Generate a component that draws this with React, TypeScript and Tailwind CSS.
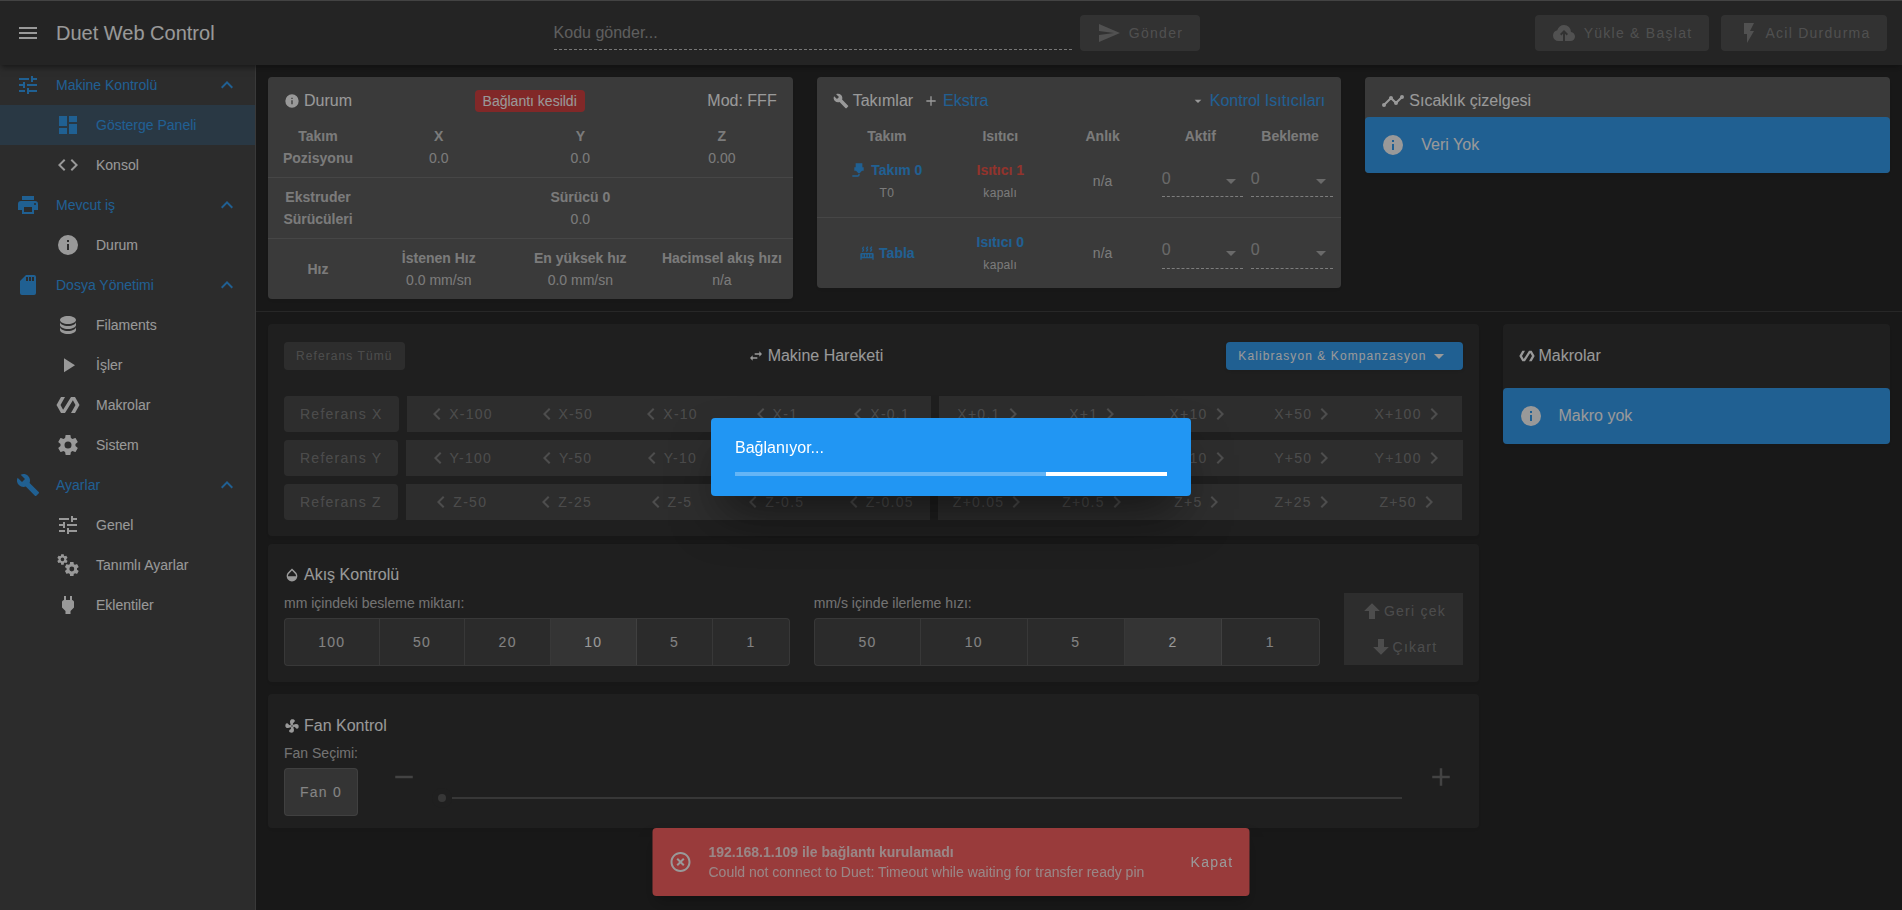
import React from "react";

const icons = {
  menu: "M3,6H21V8H3V6M3,11H21V13H3V11M3,16H21V18H3V16Z",
  tune: "M3,17V19H9V17H3M3,5V7H13V5H3M13,21V19H21V17H13V15H11V21H13M7,9V11H3V13H7V15H9V9H7M21,13V11H11V13H21M15,9H17V7H21V5H17V3H15V9Z",
  dashboard: "M13,3V9H21V3M13,21H21V11H13M3,21H11V15H3M3,13H11V3H3V13Z",
  code: "M14.6,16.6L19.2,12L14.6,7.4L16,6L22,12L16,18L14.6,16.6M9.4,16.6L4.8,12L9.4,7.4L8,6L2,12L8,18L9.4,16.6Z",
  printer:
    "M18,3H6V7H18M19,12A1,1 0 0,1 18,11A1,1 0 0,1 19,10A1,1 0 0,1 20,11A1,1 0 0,1 19,12M16,19H8V14H16M19,8H5A3,3 0 0,0 2,11V17H6V21H18V17H22V11A3,3 0 0,0 19,8Z",
  info: "M13,9H11V7H13M13,17H11V11H13M12,2A10,10 0 0,0 2,12A10,10 0 0,0 12,22A10,10 0 0,0 22,12A10,10 0 0,0 12,2Z",
  sd: "M18,8H16V4H18M15,8H13V4H15M12,8H10V4H12M18,2H10L4,8V20A2,2 0 0,0 6,22H18A2,2 0 0,0 20,20V4A2,2 0 0,0 18,2Z",
  database:
    "M12,3C7.58,3 4,4.79 4,7C4,9.21 7.58,11 12,11C16.42,11 20,9.21 20,7C20,4.79 16.42,3 12,3M4,9V12C4,14.21 7.58,16 12,16C16.42,16 20,14.21 20,12V9C20,11.21 16.42,13 12,13C7.58,13 4,11.21 4,9M4,14V17C4,19.21 7.58,21 12,21C16.42,21 20,19.21 20,17V14C20,16.21 16.42,18 12,18C7.58,18 4,16.21 4,14Z",
  play: "M8,5.14V19.14L19,12.14L8,5.14Z",
  polymer:
    "M19,4H15L7.1,16.63L4.5,12L9,4H5L0.5,12L5,20H9L16.89,7.37L19.5,12L15,20H19L23.5,12L19,4Z",
  cog: "M12,15.5A3.5,3.5 0 0,1 8.5,12A3.5,3.5 0 0,1 12,8.5A3.5,3.5 0 0,1 15.5,12A3.5,3.5 0 0,1 12,15.5M19.43,12.97C19.47,12.65 19.5,12.33 19.5,12C19.5,11.67 19.47,11.34 19.43,11L21.54,9.37C21.73,9.22 21.78,8.95 21.66,8.73L19.66,5.27C19.54,5.05 19.27,4.96 19.05,5.05L16.56,6.05C16.04,5.66 15.5,5.32 14.87,5.07L14.5,2.42C14.46,2.18 14.25,2 14,2H10C9.75,2 9.54,2.18 9.5,2.42L9.13,5.07C8.5,5.32 7.96,5.66 7.44,6.05L4.95,5.05C4.73,4.96 4.46,5.05 4.34,5.27L2.34,8.73C2.21,8.95 2.27,9.22 2.46,9.37L4.57,11C4.53,11.34 4.5,11.67 4.5,12C4.5,12.33 4.53,12.65 4.57,12.97L2.46,14.63C2.27,14.78 2.21,15.05 2.34,15.27L4.34,18.73C4.46,18.95 4.73,19.03 4.95,18.95L7.44,17.94C7.96,18.34 8.5,18.68 9.13,18.93L9.5,21.58C9.54,21.82 9.75,22 10,22H14C14.25,22 14.46,21.82 14.5,21.58L14.87,18.93C15.5,18.67 16.04,18.34 16.56,17.94L19.05,18.95C19.27,19.03 19.54,18.95 19.66,18.73L21.66,15.27C21.78,15.05 21.73,14.78 21.54,14.63L19.43,12.97Z",
  wrench:
    "M22.7,19L13.6,9.9C14.5,7.6 14,4.9 12.1,3C10.1,1 7.1,0.6 4.7,1.7L9,6L6,9L1.6,4.7C0.4,7.1 0.9,10.1 2.9,12.1C4.8,14 7.5,14.5 9.8,13.6L18.9,22.7C19.3,23.1 19.9,23.1 20.3,22.7L22.6,20.4C23.1,20 23.1,19.3 22.7,19Z",
  plug: "M16,7V3H14V7H10V3H8V7H8C7,7 6,8 6,9V14.5L9.5,18V21H14.5V18L18,14.5V9C18,8 17,7 16,7Z",
  chevronUp: "M7.41,15.41L12,10.83L16.59,15.41L18,14L12,8L6,14L7.41,15.41Z",
  chevronLeft: "M15.41,16.58L10.83,12L15.41,7.41L14,6L8,12L14,18L15.41,16.58Z",
  chevronRight: "M8.59,16.58L13.17,12L8.59,7.41L10,6L16,12L10,18L8.59,16.58Z",
  send: "M2,21L23,12L2,3V10L17,12L2,14V21Z",
  cloudUpload:
    "M11 20H6.5Q4.22 20 2.61 18.43 1 16.85 1 14.58 1 12.63 2.17 11.1 3.35 9.57 5.25 9.15 5.88 6.85 7.75 5.43 9.63 4 12 4 14.93 4 16.96 6.04 19 8.07 19 11 20.73 11.2 21.86 12.5 23 13.78 23 15.5 23 17.38 21.69 18.69 20.38 20 18.5 20H13V12.85L14.6 14.4 16 13 12 9 8 13 9.4 14.4 11 12.85Z",
  flash: "M7,2V13H10V22L17,10H13L17,2H7Z",
  timeline:
    "M3,14L3.5,14.07L8.07,9.5C7.89,8.85 8.06,8.11 8.59,7.59C9.37,6.8 10.63,6.8 11.41,7.59C11.94,8.11 12.11,8.85 11.93,9.5L14.5,12.07L15,12C15.18,12 15.35,12 15.5,12.07L19.07,8.5C19,8.35 19,8.18 19,8A2,2 0 0,1 21,6A2,2 0 0,1 23,8A2,2 0 0,1 21,10C20.82,10 20.65,10 20.5,9.93L16.93,13.5C17,13.65 17,13.82 17,14A2,2 0 0,1 15,16A2,2 0 0,1 13,14L13.07,13.5L10.5,10.93C10.18,11 9.82,11 9.5,10.93L4.93,15.5L5,16A2,2 0 0,1 3,18A2,2 0 0,1 1,16A2,2 0 0,1 3,14Z",
  swap: "M21,9L17,5V8H10V10H17V13M7,11L3,15L7,19V16H14V14H7V11Z",
  menuDown: "M7,10L12,15L17,10H7Z",
  arrowUp: "M15,20H9V12H4.16L12,4.16L19.84,12H15V20Z",
  arrowDown: "M9,4H15V12H19.84L12,19.84L4.16,12H9V4Z",
  closeCircle:
    "M12,20C7.59,20 4,16.41 4,12C4,7.59 7.59,4 12,4C16.41,4 20,7.59 20,12C20,16.41 16.41,20 12,20M12,2C6.47,2 2,6.47 2,12C2,17.53 6.47,22 12,22C17.53,22 22,17.53 22,12C22,6.47 17.53,2 12,2M14.59,8L12,10.59L9.41,8L8,9.41L10.59,12L8,14.59L9.41,16L12,13.41L14.59,16L16,14.59L13.41,12L16,9.41L14.59,8Z",
  plus: "M19,13H13V19H11V13H5V11H11V5H13V11H19V13Z",
  minus: "M19,13H5V11H19V13Z",
  fan: "M12,11A1,1 0 0,0 11,12A1,1 0 0,0 12,13A1,1 0 0,0 13,12A1,1 0 0,0 12,11M12.5,2C17,2 17.11,5.57 14.75,6.75C13.76,7.24 13.32,8.29 13.13,9.22C13.61,9.42 14.03,9.73 14.35,10.13C18.05,8.13 22.03,8.92 22.03,12.5C22.03,17 18.46,17.1 17.28,14.73C16.78,13.74 15.72,13.3 14.79,13.11C14.59,13.59 14.28,14 13.88,14.34C15.87,18.03 15.08,22 11.5,22C7,22 6.91,18.42 9.27,17.24C10.25,16.75 10.69,15.71 10.89,14.79C10.4,14.59 9.97,14.27 9.65,13.87C5.96,15.85 2,15.07 2,11.5C2,7 5.56,6.89 6.74,9.26C7.24,10.25 8.29,10.68 9.22,10.87C9.41,10.39 9.73,9.97 10.14,9.65C8.15,5.96 8.94,2 12.5,2Z",
  opacity:
    "M17.66,8L12,2.35L6.34,8C4.78,9.56 4,11.64 4,13.64C4,15.64 4.78,17.75 6.34,19.31C7.9,20.87 9.95,21.66 12,21.66C14.05,21.66 16.1,20.87 17.66,19.31C19.22,17.75 20,15.64 20,13.64C20,11.64 19.22,9.56 17.66,8M6,14C6,12 6.62,10.73 7.76,9.6L12,5.27L16.24,9.65C17.38,10.77 18,12 18,14H6Z",
  nozzle:
    "M7,2H17V8H19V13H16.5L13,17H11L7.5,13H5V8H7V2M10,22H2V20H10A1,1 0 0,0 11,19V18H13V19A3,3 0 0,1 10,22Z",
  radiator:
    "M7.95,3L6.53,5.19L7.95,7.4H7.94L5.95,10.5L4.22,9.6L5.64,7.39L4.22,5.19L6.22,2.09L7.95,3M13.95,2.89L12.53,5.1L13.95,7.3L13.94,7.31L11.95,10.4L10.22,9.5L11.64,7.3L10.22,5.1L12.22,2L13.95,2.89M20,2.89L18.56,5.1L20,7.3V7.31L18,10.4L16.25,9.5L17.67,7.3L16.25,5.1L18.25,2L20,2.89M2,22V14A2,2 0 0,1 4,12H20A2,2 0 0,1 22,14V22H20V20H4V22H2M6,14A1,1 0 0,0 5,15V17A1,1 0 0,0 6,18A1,1 0 0,0 7,17V15A1,1 0 0,0 6,14M10,14A1,1 0 0,0 9,15V17A1,1 0 0,0 10,18A1,1 0 0,0 11,17V15A1,1 0 0,0 10,14M14,14A1,1 0 0,0 13,15V17A1,1 0 0,0 14,18A1,1 0 0,0 15,17V15A1,1 0 0,0 14,14M18,14A1,1 0 0,0 17,15V17A1,1 0 0,0 18,18A1,1 0 0,0 19,17V15A1,1 0 0,0 18,14Z",
};

type IconName = keyof typeof icons | "cogs";

const Icon: React.FC<{ name: IconName; className?: string }> = ({ name, className = "size-6" }) => (
  <svg viewBox="0 0 24 24" fill="currentColor" aria-hidden="true" className={`shrink-0 ${className}`}>
    {name === "cogs" ? (
      <>
        <path d={icons.cog} transform="translate(0.2 0.2) scale(0.52)" />
        <path d={icons.cog} transform="translate(7.4 7.6) scale(0.7)" />
      </>
    ) : (
      <path d={icons[name]} />
    )}
  </svg>
);

interface NavGroup {
  icon: IconName;
  title: string;
  items: { icon: IconName; title: string; active?: boolean }[];
}

const navGroups: NavGroup[] = [
  {
    icon: "tune",
    title: "Makine Kontrolü",
    items: [
      { icon: "dashboard", title: "Gösterge Paneli", active: true },
      { icon: "code", title: "Konsol" },
    ],
  },
  { icon: "printer", title: "Mevcut iş", items: [{ icon: "info", title: "Durum" }] },
  {
    icon: "sd",
    title: "Dosya Yönetimi",
    items: [
      { icon: "database", title: "Filaments" },
      { icon: "play", title: "İşler" },
      { icon: "polymer", title: "Makrolar" },
      { icon: "cog", title: "Sistem" },
    ],
  },
  {
    icon: "wrench",
    title: "Ayarlar",
    items: [
      { icon: "tune", title: "Genel" },
      { icon: "cogs", title: "Tanımlı Ayarlar" },
      { icon: "plug", title: "Eklentiler" },
    ],
  },
];

const moveAxes = [
  { axis: "X", steps: ["100", "50", "10", "1", "0.1"] },
  { axis: "Y", steps: ["100", "50", "10", "1", "0.1"] },
  { axis: "Z", steps: ["50", "25", "5", "0.5", "0.05"] },
];

const disabledBtn =
  "flex h-9 items-center justify-center bg-white/12 text-sm tracking-[0.09em] text-white/30";

const AppBar = () => (
  <header className="relative z-10 flex h-[65px] items-center border-t border-[#616161] bg-[#272727] pr-[15px] pl-4 shadow-md shadow-black/50">
    <button aria-label="Menü">
      <Icon name="menu" />
    </button>
    <h1 className="ml-4 text-xl">Duet Web Control</h1>
    <div className="ml-[339px] flex flex-1 items-center gap-2">
      <input
        aria-label="Kodu gönder"
        placeholder="Kodu gönder..."
        className="h-[34px] min-w-0 flex-1 border-b border-dashed border-white/70 bg-transparent text-base outline-none placeholder:text-white/50"
      />
      <button disabled className={`${disabledBtn} w-[120px] gap-2 rounded`}>
        <Icon name="send" />
        Gönder
      </button>
    </div>
    <div className="ml-[335px] flex gap-3">
      <button disabled className={`${disabledBtn} w-[174px] gap-2 rounded`}>
        <Icon name="cloudUpload" />
        Yükle &amp; Başlat
      </button>
      <button disabled className={`${disabledBtn} w-[166px] gap-1 rounded`}>
        <Icon name="flash" />
        Acil Durdurma
      </button>
    </div>
  </header>
);

const Sidebar = () => (
  <nav className="w-64 shrink-0 border-r border-white/12 bg-[#363636] text-sm">
    {navGroups.map((group) => (
      <div key={group.title}>
        <button className="flex h-10 w-full items-center gap-4 px-4 text-left text-[#2196f3]">
          <Icon name={group.icon} />
          <span className="flex-1">{group.title}</span>
          <Icon name="chevronUp" />
        </button>
        {group.items.map((item) => (
          <a
            key={item.title}
            href="#"
            className={`flex h-10 items-center gap-4 pl-14 ${item.active ? "bg-[#2196f3]/24 text-[#2196f3]" : ""}`}
          >
            <Icon name={item.icon} />
            {item.title}
          </a>
        ))}
      </div>
    ))}
  </nav>
);

const Metric: React.FC<{ label?: string; value?: string }> = ({ label, value }) => (
  <div className="flex-1">
    <strong className="block">{label}</strong>
    {value}
  </div>
);

const StatusCard = () => (
  <section className="rounded bg-[#515151] shadow-md">
    <div className="flex items-center justify-between px-4 pt-3 pb-1">
      <h2 className="flex items-center gap-1">
        <Icon name="info" className="size-4" />
        Durum
      </h2>
      <span className="rounded bg-[#d32f2f] px-2 text-sm leading-[22px]">Bağlantı kesildi</span>
      <span>Mod: FFF</span>
    </div>
    <div className="text-center text-sm leading-[22px] text-white/70">
      <div className="flex items-center py-2">
        <strong className="w-[100px] px-2">Takım Pozisyonu</strong>
        <Metric label="X" value="0.0" />
        <Metric label="Y" value="0.0" />
        <Metric label="Z" value="0.00" />
      </div>
      <div className="flex items-center border-t border-white/12 py-2">
        <strong className="w-[100px] px-2">Ekstruder Sürücüleri</strong>
        <Metric label="Sürücü 0" value="0.0" />
      </div>
      <div className="flex items-center border-t border-white/12 py-2">
        <strong className="w-[100px] px-2">Hız</strong>
        <Metric label="İstenen Hız" value="0.0 mm/sn" />
        <Metric label="En yüksek hız" value="0.0 mm/sn" />
        <Metric label="Hacimsel akış hızı" value="n/a" />
      </div>
    </div>
  </section>
);

const TempSelect: React.FC<{ label: string }> = ({ label }) => (
  <div className="relative">
    <select
      aria-label={label}
      className="block h-8 w-full appearance-none border-b border-dashed border-white/70 pb-1 text-base text-white/50 outline-none"
    >
      <option>0</option>
    </select>
    <Icon name="menuDown" className="pointer-events-none absolute top-1 right-0 size-6 text-white/50" />
  </div>
);

const ToolsCard = () => (
  <section className="rounded bg-[#515151] shadow-md">
    <div className="flex items-center px-4 pt-3 pb-1">
      <h2 className="flex items-center gap-1">
        <Icon name="wrench" className="size-4" />
        Takımlar
      </h2>
      <a href="#" className="ml-[10px] flex items-center gap-1 text-[#2196f3]">
        <Icon name="plus" className="size-4 text-white" />
        Ekstra
      </a>
      <a href="#" className="ml-auto flex items-center gap-1 text-[#2196f3]">
        <Icon name="menuDown" className="size-4 text-white" />
        Kontrol Isıtıcıları
      </a>
    </div>
    <table className="w-full table-fixed text-center text-sm text-white/70">
      <thead>
        <tr className="h-[29px]">
          <th className="w-[26%] pt-2 pl-1">Takım</th>
          <th className="w-[18%] pt-2">Isıtıcı</th>
          <th className="w-[21%] pt-2">Anlık</th>
          <th className="w-[17%] pt-2 pr-1">Aktif</th>
          <th className="w-[18%] pt-2 pr-2">Bekleme</th>
        </tr>
      </thead>
      <tbody>
        <tr className="h-[71px]">
          <td className="pl-1">
            <a href="#" className="flex items-center justify-center gap-1 leading-6 font-bold text-[#2196f3]">
              <Icon name="nozzle" className="size-4" />
              Takım 0
            </a>
            <span className="block text-xs leading-[22px] tracking-wide">T0</span>
          </td>
          <td>
            <a href="#" className="block leading-6 font-bold text-[#f44336]">
              Isıtıcı 1
            </a>
            <span className="block text-xs leading-[22px] tracking-wide">kapalı</span>
          </td>
          <td>n/a</td>
          <td className="px-1">
            <TempSelect label="Isıtıcı 1 aktif" />
          </td>
          <td className="pr-2 pl-1">
            <TempSelect label="Isıtıcı 1 bekleme" />
          </td>
        </tr>
        <tr className="h-[71px] border-t border-white/12">
          <td className="pl-1">
            <a href="#" className="flex items-center justify-center gap-1 font-bold text-[#2196f3]">
              <Icon name="radiator" className="size-4" />
              Tabla
            </a>
          </td>
          <td>
            <a href="#" className="block leading-6 font-bold text-[#2196f3]">
              Isıtıcı 0
            </a>
            <span className="block text-xs leading-[22px] tracking-wide">kapalı</span>
          </td>
          <td>n/a</td>
          <td className="px-1">
            <TempSelect label="Isıtıcı 0 aktif" />
          </td>
          <td className="pr-2 pl-1">
            <TempSelect label="Isıtıcı 0 bekleme" />
          </td>
        </tr>
      </tbody>
    </table>
  </section>
);

const InfoAlert: React.FC<{ children: React.ReactNode }> = ({ children }) => (
  <div className="flex h-14 items-center gap-4 rounded bg-[#2196f3] px-4">
    <Icon name="info" />
    {children}
  </div>
);

const MovementCard = () => (
  <section className="rounded bg-[#1e1e1e] p-4 shadow-md">
    <div className="flex items-center justify-between pt-[2px] pb-[26px]">
      <button
        disabled
        className="h-7 rounded bg-white/12 px-3 text-xs tracking-[0.09em] text-white/30"
      >
        Referans Tümü
      </button>
      <h2 className="flex items-center gap-1">
        <Icon name="swap" className="size-4" />
        Makine Hareketi
      </h2>
      <button className="flex h-7 items-center rounded bg-[#2196f3] px-3 text-xs tracking-[0.09em] shadow">
        Kalibrasyon &amp; Kompanzasyon
        <Icon name="menuDown" />
      </button>
    </div>
    <div className="flex flex-col gap-2">
      {moveAxes.map(({ axis, steps }) => (
        <div key={axis} className="flex gap-2">
          <button disabled className={`${disabledBtn} rounded px-4`}>
            Referans {axis}
          </button>
          <div className="flex flex-1">
            {steps.map((step) => (
              <button key={step} disabled className={`${disabledBtn} flex-1`}>
                <Icon name="chevronLeft" />
                {axis}-{step}
              </button>
            ))}
          </div>
          <div className="flex flex-1">
            {[...steps].reverse().map((step) => (
              <button key={step} disabled className={`${disabledBtn} flex-1`}>
                {axis}+{step}
                <Icon name="chevronRight" />
              </button>
            ))}
          </div>
        </div>
      ))}
    </div>
  </section>
);

interface ToggleGroupProps {
  label: string;
  options: string[];
  selected: string;
}

const ToggleGroup: React.FC<ToggleGroupProps> = ({ label, options, selected }) => (
  <div role="group" aria-label={label} className="flex-1">
    <p className="mb-[5px] text-sm text-white/70">{label}</p>
    <div className="flex h-12 divide-x divide-white/12 overflow-hidden rounded border border-white/12 bg-[#343434] text-sm tracking-[0.09em]">
      {options.map((option) => (
        <button
          key={option}
          aria-pressed={option === selected}
          className={`flex-auto px-3 ${option === selected ? "bg-[#454545] text-white" : "text-white/80"}`}
        >
          {option}
        </button>
      ))}
    </div>
  </div>
);

const ExtrusionCard = () => (
  <section className="mt-2 rounded bg-[#1e1e1e] p-4 pt-[19px] shadow-md">
    <h2 className="mb-[6px] flex items-center gap-1">
      <Icon name="opacity" className="size-4" />
      Akış Kontrolü
    </h2>
    <div className="flex items-start gap-6">
      <ToggleGroup
        label="mm içindeki besleme miktarı:"
        options={["100", "50", "20", "10", "5", "1"]}
        selected="10"
      />
      <ToggleGroup
        label="mm/s içinde ilerleme hızı:"
        options={["50", "10", "5", "2", "1"]}
        selected="2"
      />
      <div className="w-[119px]">
        <button disabled className={`${disabledBtn} w-full`}>
          <Icon name="arrowUp" />
          Geri çek
        </button>
        <button disabled className={`${disabledBtn} w-full`}>
          <Icon name="arrowDown" />
          Çıkart
        </button>
      </div>
    </div>
  </section>
);

const FanCard = () => (
  <section className="mt-3 rounded bg-[#1e1e1e] px-4 pt-5 pb-3 shadow-md">
    <h2 className="mb-[5px] flex items-center gap-1">
      <Icon name="fan" className="size-4" />
      Fan Kontrol
    </h2>
    <div className="flex">
      <div>
        <p className="mb-[5px] text-sm text-white/70">Fan Seçimi:</p>
        <button
          aria-pressed="true"
          className="h-12 rounded border border-white/12 bg-[#454545] px-[15px] text-sm tracking-[0.09em] text-white/80"
        >
          Fan 0
        </button>
      </div>
      <button disabled aria-label="Azalt" className="mt-[19px] ml-[31px] self-start text-white/30">
        <Icon name="minus" className="size-[30px]" />
      </button>
      <input
        type="range"
        aria-label="Fan 0"
        disabled
        defaultValue={0}
        className="mt-[54px] ml-[19px] h-[2px] flex-1 appearance-none bg-[#4a4a4a] [&::-webkit-slider-thumb]:size-2 [&::-webkit-slider-thumb]:appearance-none [&::-webkit-slider-thumb]:rounded-full [&::-webkit-slider-thumb]:bg-[#4a4a4a] [&::-webkit-slider-thumb]:shadow-[0_0_0_6px_#1e1e1e]"
      />
      <button disabled aria-label="Artır" className="mt-[19px] mr-[7px] ml-6 self-start text-white/30">
        <Icon name="plus" className="size-[30px]" />
      </button>
    </div>
  </section>
);

const ErrorToast = () => (
  <div
    role="alert"
    className="fixed bottom-[14px] left-1/2 z-20 flex h-[68px] w-[597px] -translate-x-1/2 items-center rounded bg-[#ff5252] px-4 text-sm shadow-lg shadow-black/50"
  >
    <Icon name="closeCircle" />
    <div className="ml-4 flex-1 text-white/80">
      <strong className="block">192.168.1.109 ile bağlantı kurulamadı</strong>
      Could not connect to Duet: Timeout while waiting for transfer ready pin
    </div>
    <button className="tracking-[0.09em]">Kapat</button>
  </div>
);

const ConnectingDialog = () => (
  <div className="fixed inset-0 z-30 flex items-center justify-center bg-[#212121]/46 pt-1">
    <div
      role="dialog"
      aria-label="Bağlanıyor"
      className="w-[480px] rounded bg-[#2196f3] px-6 pt-[18px] pb-5 shadow-2xl shadow-black/60"
    >
      <p>Bağlanıyor...</p>
      <div role="progressbar" className="mt-3 flex h-1 justify-end bg-white/30">
        <div className="w-[28%] bg-white" />
      </div>
    </div>
  </div>
);

export default function App() {
  return (
    <div className="flex min-h-screen flex-col bg-[#121212] font-['Liberation_Sans',Arial,sans-serif] text-base text-white">
      <AppBar />
      <div className="flex flex-1">
        <Sidebar />
        <main className="min-w-0 flex-1">
          <div className="flex items-start py-3">
            <div className="w-1/3 px-3">
              <StatusCard />
            </div>
            <div className="w-1/3 px-3">
              <ToolsCard />
            </div>
            <div className="w-1/3 px-3">
              <section className="rounded bg-[#515151] shadow-md">
                <h2 className="flex items-center gap-1 px-4 pt-3 pb-1">
                  <Icon name="timeline" />
                  Sıcaklık çizelgesi
                </h2>
                <InfoAlert>Veri Yok</InfoAlert>
              </section>
            </div>
          </div>
          <hr className="border-white/12" />
          <div className="flex items-start py-3">
            <div className="w-3/4 px-3">
              <MovementCard />
              <ExtrusionCard />
              <FanCard />
            </div>
            <div className="w-1/4 px-3">
              <section className="rounded bg-[#1e1e1e] shadow-md">
                <h2 className="flex h-16 items-center gap-1 px-4">
                  <Icon name="polymer" className="size-4" />
                  Makrolar
                </h2>
                <InfoAlert>Makro yok</InfoAlert>
              </section>
            </div>
          </div>
        </main>
      </div>
      <ErrorToast />
      <ConnectingDialog />
    </div>
  );
}
